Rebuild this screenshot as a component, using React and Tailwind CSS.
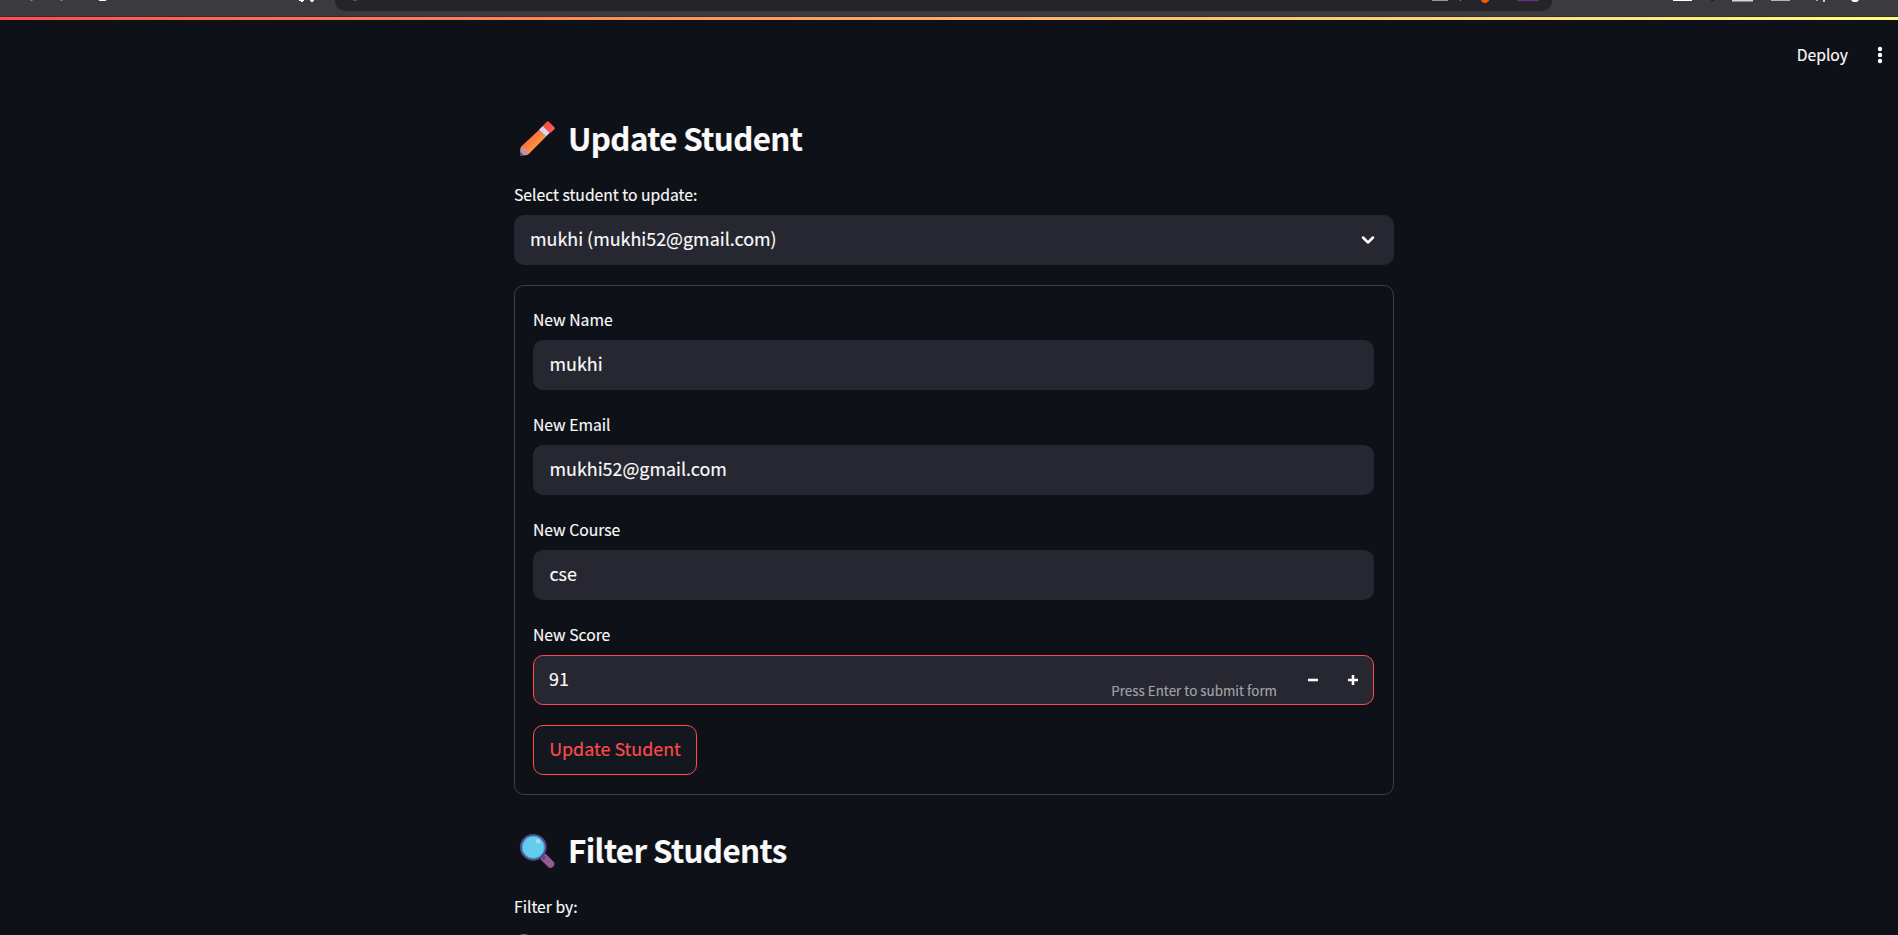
function BrowserStrip() {
  return (
    <svg className="block h-[17px] w-full shrink-0" viewBox="0 0 1898 17" shapeRendering="auto">
      <rect width="1898" height="17" fill="#3b3a3f" />
      <rect y="16" width="1898" height="1" fill="#2d2f34" />
      <path d="M335 0h1217v1a10 10 0 0 1-10 10H345a10 10 0 0 1-10-10z" fill="#252429" />
      <rect x="30.500" width="2" height="1" fill="#8b8b8e" />
      <rect x="60.500" width="2" height="1" fill="#8b8b8e" />
      <path d="M98 0h9l-2 1h-5z" fill="#fff" />
      <path d="M299 0h5v1h-1v1h-2v-1h-2zM310 0h4v1h-1v1h-2v-1h-1z" fill="#fff" />
      <rect x="353" width="4" height="1" fill="#55545a" />
      <rect x="1432" width="16" height="1" fill="#98979b" />
      <rect x="1460" width="1" height="1" fill="#8b8b8e" />
      <path d="M1481 0h8v1l-3 2h-2l-3-2z" fill="#ff5500" />
      <rect x="1517" width="22" height="1" fill="#6a2c91" />
      <rect x="1673" width="19" height="1" fill="#fff" />
      <rect x="1711" width="3" height="1" fill="#1c1c20" />
      <rect x="1732" width="21" height="1.500" fill="#d6d6d8" />
      <rect x="1771" width="19" height="1" fill="#b5b5b8" />
      <rect x="1816" width="2" height="1" fill="#a5a5a8" />
      <rect x="1823" width="2" height="2" fill="#d0d0d2" />
      <path d="M1851 0h8l-2 2h-4z" fill="#fff" />
    </svg>
  );
}

function Pencil() {
  return (
    <svg className="h-9 w-9 shrink-0" viewBox="0 0 36 36">
      <defs>
        <linearGradient id="wood" x1="0" y1="0" x2="1" y2="1">
          <stop offset="0.3" stopColor="#f96a3c" />
          <stop offset="0.65" stopColor="#ff9640" />
        </linearGradient>
        <linearGradient id="eraser" x1="0" y1="0" x2="1" y2="1">
          <stop offset="0" stopColor="#f0483f" />
          <stop offset="1" stopColor="#ff6356" />
        </linearGradient>
      </defs>
      <path d="M20.200 9.700 27.100 16.500 9.500 34.200 2.200 26.600z" fill="url(#wood)" />
      <path d="M2.200 26.500c4 .8 6.500 3.700 7.400 7.600l-1.300.9L1.500 35.800 1 35.200 1.300 28.700z" fill="#c99296" />
      <path d="M1.200 31.800 4.700 35.400 1.300 35.800 1 35.200z" fill="#613866" />
      <path d="M20 9.800 24 5.800 31 12.600 27 16.600z" fill="#ded4ee" />
      <path d="M23.600 6 27.500 2q1.300-1.300 2.600 0l5 5q1.300 1.300 0 2.600L31 13.200z" fill="url(#eraser)" />
    </svg>
  );
}

function Magnifier() {
  return (
    <svg className="mt-px h-9 w-9 shrink-0" viewBox="0 0 36 36">
      <path d="m25 24.500 6.500 6.500" stroke="#945a91" strokeWidth="7.500" strokeLinecap="round" />
      <path d="m22 22 4 4" stroke="#674b7e" strokeWidth="4" />
      <circle cx="14.300" cy="14.300" r="12.300" fill="#64cdeb" stroke="#514c87" strokeWidth="2.200" />
      <circle cx="14.300" cy="14.300" r="11" fill="none" stroke="#3fa8e0" strokeWidth="1" />
      <circle cx="19" cy="8.300" r="2.300" fill="#a9d9f7" />
    </svg>
  );
}

function Heading({ icon, children }) {
  return (
    <h2 className="flex h-[42px] items-center pl-[5px] text-[31.300px] leading-[42px] font-bold tracking-[-0.6px]">
      {icon}
      <span className="ml-[13px] whitespace-nowrap">{children}</span>
    </h2>
  );
}

function Label({ children }) {
  return <label className="block h-[30px] text-[15.700px] leading-[19px] whitespace-nowrap">{children}</label>;
}

function Field({ label, value }) {
  return (
    <div className="mb-[25px]">
      <Label>{label}</Label>
      <div className="h-[50px] w-[841px] rounded-[10px] bg-[#262730] px-[16.500px] text-[17.900px] leading-[46px]">
        {value}
      </div>
    </div>
  );
}

export default function App() {
  return (
    <div className="flex h-[935px] w-full flex-col overflow-hidden bg-[#0e1117] font-['Noto_Sans_CJK_SC',sans-serif] text-[#fafafa] [-webkit-text-stroke:0.15px]">
      <BrowserStrip />
      <div className="h-[3px] shrink-0 bg-linear-to-r from-[#ff4b4b] to-[#fffd80]" />
      <header className="flex h-[69px] shrink-0 items-center justify-end pr-[15px]">
        <span className="text-[15.700px] leading-[25px]">Deploy</span>
        <svg className="ml-[29px] h-[18px] w-[6px]" viewBox="0 0 6 18" fill="#fafafa">
          <circle cx="3" cy="3" r="2.200" />
          <circle cx="3" cy="9" r="2.200" />
          <circle cx="3" cy="15" r="2.200" />
        </svg>
      </header>

      <main className="ml-[514px] w-[880px] pt-7">
        <Heading icon={<Pencil />}>Update Student</Heading>
        <div className="mt-[26px]">
          <Label>Select student to update:</Label>
          <div className="flex h-[50px] items-center justify-between rounded-[10px] bg-[#262730] pr-[19px] pl-4 text-[17.900px] leading-[30px]">
            <span className="-mt-1">mukhi (mukhi52@gmail.com)</span>
            <svg className="h-[10px] w-[14px]" viewBox="0 0 14 10" fill="none" stroke="#fafafa" strokeWidth="2.500" strokeLinecap="round" strokeLinejoin="round">
              <path d="m2 2.500 5 5 5-5" />
            </svg>
          </div>
        </div>

        <form className="mt-5 h-[510px] rounded-[10px] border border-[#3d3f44] px-[18px] pt-6">
          <Field label="New Name" value="mukhi" />
          <Field label="New Email" value="mukhi52@gmail.com" />
          <Field label="New Course" value="cse" />
          <Label>New Score</Label>
          <div className="flex h-[50px] w-[841px] items-center rounded-[10px] border border-[#ff4b4b] bg-[#262730] pr-[14px] pl-[15px] text-[17.900px] leading-[30px]">
            <span className="-mt-1">91</span>
            <span className="mt-[19px] ml-auto text-[13.400px] leading-5 whitespace-nowrap text-[#a3a4a8]">
              Press Enter to submit form
            </span>
            <svg className="ml-[30px] h-[12px] w-[12px]" viewBox="0 0 12 12" fill="#fafafa">
              <rect x="1" y="4.700" width="10" height="2.600" />
            </svg>
            <svg className="ml-[28px] h-[12px] w-[12px]" viewBox="0 0 12 12" fill="#fafafa">
              <path d="M1 4.700h3.700V1h2.600v3.700H11v2.600H7.300V11H4.700V7.300H1z" />
            </svg>
          </div>
          <button type="button" className="mt-5 h-[50px] w-[164px] rounded-[10px] border border-[#ff4b4b] bg-[#13171f] pb-1 text-[17.900px] leading-[30px] whitespace-nowrap text-[#ff4b4b]">
            Update Student
          </button>
        </form>

        <div className="mt-[34px]">
          <Heading icon={<Magnifier />}>Filter Students</Heading>
        </div>
        <div className="mt-[26px]">
          <Label>Filter by:</Label>
          <svg className="mt-[7px] h-5 w-5" viewBox="0 0 20 20">
            <circle cx="10" cy="10" r="10" fill="#6a6b70" />
          </svg>
        </div>
      </main>
    </div>
  );
}
